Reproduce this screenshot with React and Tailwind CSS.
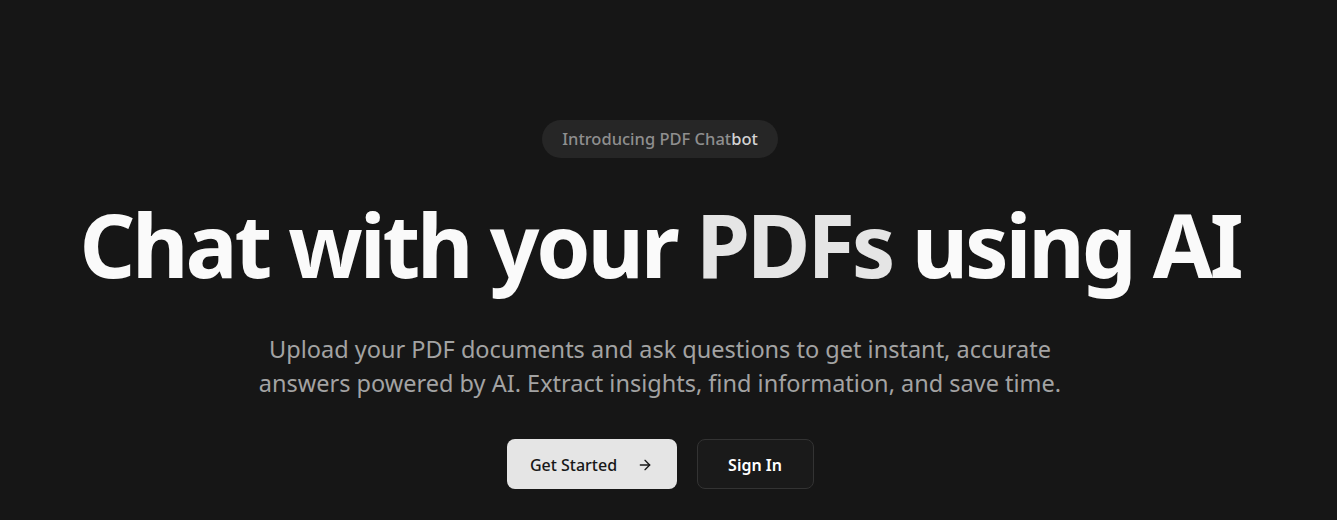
import React from 'react';
import { ArrowRight } from 'lucide-react';

const App = () => {
  return (
    <div
      className="min-h-[520px] w-full bg-[#161616] text-white"
      style={{ fontFamily: '"Noto Sans", "Open Sans", sans-serif' }}
    >
      <div className="pr-[17px] flex flex-col items-center">
        {/* Badge */}
        <div className="mt-[120px] h-[38px] px-[20px] rounded-full bg-[#262626] flex items-center">
          <span className="text-[16.5px] font-medium text-[#8f8f8f]">
            Introducing PDF Chat<span className="text-[#d4d4d4]">bot</span>
          </span>
        </div>

        {/* Heading */}
        <h1 className="mt-[36px] text-[87px] leading-[100px] font-bold tracking-[-3.2px] text-[#fafafa] whitespace-nowrap">
          Chat with your <span className="text-[#e5e5e5]">PDFs</span> using AI
        </h1>

        {/* Subtitle */}
        <p className="mt-[38px] text-center text-[23.5px] leading-[34px] text-[#a3a3a3] whitespace-nowrap">
          Upload your PDF documents and ask questions to get instant, accurate
          <br />
          answers powered by AI. Extract insights, find information, and save time.
        </p>

        {/* Actions */}
        <div className="mt-[39px] flex items-center gap-5">
          <button className="h-[50px] w-[170px] rounded-lg bg-[#e5e5e5] text-[#171717] text-[16px] font-medium flex items-center justify-center gap-5 pt-[2px]">
            Get Started
            <ArrowRight className="w-4 h-4" strokeWidth={2} />
          </button>
          <button className="h-[50px] w-[117px] rounded-lg bg-[#1a1a1a] border border-[#333333] text-white text-[16px] font-semibold flex items-center justify-center pt-[2px]">
            Sign In
          </button>
        </div>
      </div>
    </div>
  );
};

export default App;
